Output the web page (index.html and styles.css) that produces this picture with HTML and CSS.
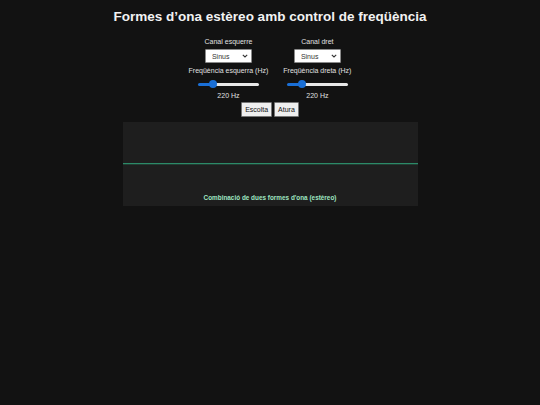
FILE: index.html
```html
<!DOCTYPE html>
<html lang="ca">
<head>
<meta charset="utf-8">
<title>Formes d'ona</title>
<link rel="stylesheet" href="styles.css">
</head>
<body>
<h1 class="title">Formes d’ona estèreo amb control de freqüència</h1>
<div class="controls">
  <div class="channel">
    <label class="lbl">Canal esquerre</label>
    <span class="selwrap">
      <select class="sel"><option>Sinus</option></select>
      <svg class="chev" width="6" height="4" viewBox="0 0 6 4"><path d="M0.8 0.8 L3 3 L5.2 0.8" fill="none" stroke="#333" stroke-width="1.1"/></svg>
    </span>
    <label class="lbl">Freqüència esquerra (Hz)</label>
    <input class="range" type="range" min="20" max="1000" value="220">
    <span class="val">220 Hz</span>
  </div>
  <div class="channel">
    <label class="lbl">Canal dret</label>
    <span class="selwrap">
      <select class="sel"><option>Sinus</option></select>
      <svg class="chev" width="6" height="4" viewBox="0 0 6 4"><path d="M0.8 0.8 L3 3 L5.2 0.8" fill="none" stroke="#333" stroke-width="1.1"/></svg>
    </span>
    <label class="lbl">Freqüència dreta (Hz)</label>
    <input class="range" type="range" min="20" max="1000" value="220">
    <span class="val">220 Hz</span>
  </div>
</div>
<div class="buttons">
  <button class="btn">Escolta</button>
  <button class="btn">Atura</button>
</div>
<div class="scope">
  <svg class="wave" width="295" height="84" viewBox="0 0 295 84">
    <rect x="0" y="41" width="295" height="1.3" fill="#2c8a68"/>
  </svg>
  <div class="caption">Combinació de dues formes d'ona (estèreo)</div>
</div>
</body>
</html>
```
FILE: styles.css
```css
html, body {
  margin: 0;
  padding: 0;
  background: #121212;
}
body {
  font-family: "Liberation Sans", Arial, sans-serif;
  color: #e6e6e6;
  text-align: center;
}
.title {
  font-size: 13.5px;
  font-weight: bold;
  color: #f2f2f2;
  margin: 8px 0 13px;
  line-height: 17px;
}
.controls {
  display: flex;
  justify-content: center;
  gap: 15px;
}
.channel {
  display: flex;
  flex-direction: column;
  align-items: center;
}
.lbl {
  font-size: 7px;
  line-height: 8px;
  color: #e0e0e0;
}
.selwrap {
  position: relative;
  display: block;
  margin: 3px 0 4px;
  height: 14px;
}
.sel {
  -webkit-appearance: none;
  appearance: none;
  display: block;
  font-family: "Liberation Sans", Arial, sans-serif;
  font-size: 7px;
  width: 47px;
  height: 14px;
  margin: 0;
  padding: 0 0 0 6px;
  background: #fff;
  color: #333;
  border: 1px solid #8a8a8a;
  border-radius: 1px;
}
.chev {
  position: absolute;
  right: 4px;
  top: 5px;
  pointer-events: none;
}
.range {
  -webkit-appearance: none;
  appearance: none;
  width: 61px;
  height: 8px;
  margin: 5px 0 3px;
  background: transparent;
}
.range::-webkit-slider-runnable-track {
  height: 3px;
  border-radius: 2px;
  background: linear-gradient(to right, #1a6fd6 0 20%, #e8e8e8 20% 100%);
}
.range::-webkit-slider-thumb {
  -webkit-appearance: none;
  width: 8px;
  height: 8px;
  border-radius: 50%;
  background: #1a6fd6;
  margin-top: -2.5px;
  border: none;
}
.val {
  font-size: 7px;
  line-height: 9px;
  color: #e0e0e0;
}
.buttons {
  display: flex;
  justify-content: center;
  gap: 2px;
  margin-top: 2px;
}
.btn {
  font-family: "Liberation Sans", Arial, sans-serif;
  font-size: 7px;
  height: 15px;
  padding: 0 3px;
  background: #efefef;
  color: #111;
  border: 1px solid #767676;
  border-radius: 1px;
}
.scope {
  position: relative;
  width: 295px;
  height: 84px;
  margin: 5px auto 0;
  background: #1e1e1e;
}
.wave {
  display: block;
}
.caption {
  position: absolute;
  left: 0;
  right: 0;
  bottom: 5px;
  font-size: 6.4px;
  font-weight: bold;
  color: #9fe6c2;
}
```
